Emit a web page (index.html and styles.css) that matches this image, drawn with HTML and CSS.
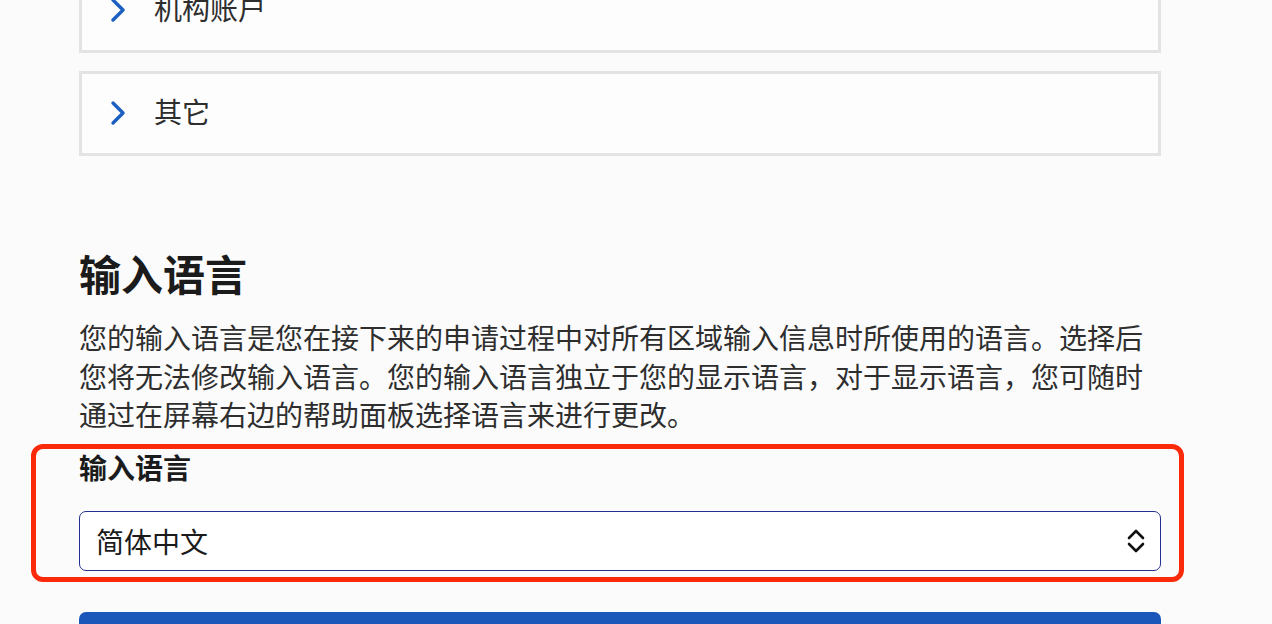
FILE: index.html
```html
<!DOCTYPE html>
<html lang="zh-CN">
<head>
    <meta charset="UTF-8">
    <meta name="viewport" content="width=device-width, initial-scale=1.0">
    <title>输入语言</title>
    <link rel="stylesheet" href="styles.css">
</head>
<body>
    <div class="page">
        <div class="section-card">
            <svg class="chevron" viewBox="0 0 16 26" fill="none" xmlns="http://www.w3.org/2000/svg">
                <path d="M3 3L13 13L3 23" stroke="currentColor" stroke-width="3.4" stroke-linecap="round" stroke-linejoin="round"/>
            </svg>
            <span class="section-title">机构账户</span>
        </div>
        <div class="section-card">
            <svg class="chevron" viewBox="0 0 16 26" fill="none" xmlns="http://www.w3.org/2000/svg">
                <path d="M3 3L13 13L3 23" stroke="currentColor" stroke-width="3.4" stroke-linecap="round" stroke-linejoin="round"/>
            </svg>
            <span class="section-title">其它</span>
        </div>

        <h2 class="heading">输入语言</h2>
        <p class="description">您的输入语言是您在接下来的申请过程中对所有区域输入信息时所使用的语言。选择后您将无法修改输入语言。您的输入语言独立于您的显示语言，对于显示语言，您可随时通过在屏幕右边的帮助面板选择语言来进行更改。</p>

        <div class="highlight">
            <label class="field-label" for="input-language">输入语言</label>
            <div class="select-box">
                <span id="input-language" class="select-value">简体中文</span>
                <svg class="select-icon" viewBox="0 0 20 26" fill="none" xmlns="http://www.w3.org/2000/svg">
                    <path d="M3 10L10 3L17 10M3 16L10 23L17 16" stroke="currentColor" stroke-width="2.6" stroke-linecap="round" stroke-linejoin="round"/>
                </svg>
            </div>
        </div>

        <div class="primary-button"></div>
    </div>
</body>
</html>
```

FILE: styles.css
```css
:root {
    --background: #fbfbfb;
    --card: #fdfdfd;
    --card-border: #e3e3e3;
    --foreground: #1b1b1b;
    --text: #2e2e2e;
    --primary: #1a57b9;
    --chevron: #1d5fc0;
    --select-border: #24308f;
    --highlight: #fb2a0b;
}

body {
    font-family: "Noto Sans CJK SC", "Noto Sans", sans-serif;
    margin: 0;
    padding: 0;
    background-color: var(--background);
    color: var(--foreground);
    overflow: hidden;
}

.page {
    display: flex;
    flex-direction: column;
    width: 1082px;
    margin-left: 79px;
    margin-top: -32px;
}

.section-card {
    display: flex;
    align-items: center;
    gap: 28px;
    height: 85px;
    box-sizing: border-box;
    padding: 0 28px 2px 28px;
    border: 3px solid var(--card-border);
    background-color: var(--card);
    margin-bottom: 18px;
}

.chevron {
    width: 16px;
    height: 26px;
    color: var(--chevron);
    flex-shrink: 0;
}

.section-title {
    font-size: 28px;
    line-height: 1;
    color: var(--text);
    margin-top: -4px;
}

.heading {
    margin: 74px 0 0 0;
    font-size: 42px;
    font-weight: 700;
    line-height: 50px;
    color: var(--foreground);
}

.description {
    margin: 20px 0 0 0;
    font-size: 28px;
    line-height: 38.5px;
    color: var(--text);
}

.highlight {
    display: flex;
    flex-direction: column;
    margin: 10px -23px 0 -48px;
    padding: 0 18px 6px 43px;
    border: 5px solid var(--highlight);
    border-radius: 12px;
}

.field-label {
    font-size: 28px;
    font-weight: 700;
    line-height: 36px;
    color: var(--foreground);
}

.select-box {
    display: flex;
    align-items: center;
    justify-content: space-between;
    height: 60px;
    box-sizing: border-box;
    margin-top: 26px;
    padding: 0 14px 0 16px;
    border: 1.5px solid var(--select-border);
    border-radius: 7px;
    background-color: #ffffff;
}

.select-value {
    font-size: 28px;
    line-height: 1;
    color: var(--foreground);
}

.select-icon {
    width: 20px;
    height: 26px;
    color: #111111;
}

.primary-button {
    height: 60px;
    margin-top: 30px;
    border-radius: 7px;
    background-color: var(--primary);
}
```
